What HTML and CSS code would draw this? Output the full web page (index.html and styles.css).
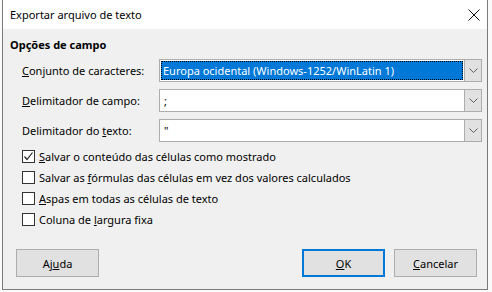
FILE: index.html
```html
<!DOCTYPE html>
<html lang="pt">
<head>
<meta charset="utf-8">
<title>Exportar arquivo de texto</title>
<link rel="stylesheet" href="styles.css">
</head>
<body>
<div class="window">
  <div class="titlebar">
    <span class="title">Exportar arquivo de texto</span>
    <svg class="close" width="12" height="12" viewBox="0 0 12 12"><path d="M0.5 0.5 L11.5 11.5 M11.5 0.5 L0.5 11.5" stroke="#111" stroke-width="1" fill="none"/></svg>
  </div>
  <div class="content">
    <div class="section-title">Opções de campo</div>
    <div class="fields">
      <div class="row">
        <span class="label"><u>C</u>onjunto de caracteres:</span>
        <div class="combo">
          <div class="field selected"><span class="focus">Europa ocidental (Windows-1252/WinLatin 1)</span></div>
          <div class="drop"><svg width="9" height="5" viewBox="0 0 9 5"><path d="M0.5 0.5 L4.5 4.5 L8.5 0.5" stroke="#606060" fill="none"/></svg></div>
        </div>
      </div>
      <div class="row">
        <span class="label"><u>D</u>elimitador de campo:</span>
        <div class="combo">
          <div class="field">;</div>
          <div class="drop"><svg width="9" height="5" viewBox="0 0 9 5"><path d="M0.5 0.5 L4.5 4.5 L8.5 0.5" stroke="#606060" fill="none"/></svg></div>
        </div>
      </div>
      <div class="row">
        <span class="label">Delimitador do <u>t</u>exto:</span>
        <div class="combo">
          <div class="field">"</div>
          <div class="drop"><svg width="9" height="5" viewBox="0 0 9 5"><path d="M0.5 0.5 L4.5 4.5 L8.5 0.5" stroke="#606060" fill="none"/></svg></div>
        </div>
      </div>
    </div>
    <div class="checks">
      <label class="check"><span class="box"><svg width="11" height="11" viewBox="0 0 11 11"><path d="M1.5 5.5 L4 8.5 L9.5 1.5" stroke="#222" stroke-width="1.2" fill="none"/></svg></span><span><u>S</u>alvar o conteúdo das células como mostrado</span></label>
      <label class="check"><span class="box"></span><span>Salvar as <u>f</u>órmulas das células em vez dos valores calculados</span></label>
      <label class="check"><span class="box"></span><span><u>A</u>spas em todas as células de texto</span></label>
      <label class="check"><span class="box"></span><span>Coluna de <u>l</u>argura fixa</span></label>
    </div>
    <div class="buttons">
      <button class="btn">Aj<u>u</u>da</button>
      <div class="spacer"></div>
      <button class="btn default"><u>O</u>K</button>
      <button class="btn"><u>C</u>ancelar</button>
    </div>
  </div>
</div>
</body>
</html>
```

FILE: styles.css
```css
html, body {
  margin: 0;
  padding: 0;
}
body {
  width: 492px;
  height: 292px;
  overflow: hidden;
  background-color: #fafafa;
  font-family: "Noto Sans", sans-serif;
  font-size: 11px;
  color: #000;
  padding-left: 2px;
  box-sizing: border-box;
}
.window {
  width: 486px;
  height: 290px;
  box-sizing: border-box;
  border: 1px solid #7a7a7a;
  border-top: none;
  background: #f0f0f0;
  display: flex;
  flex-direction: column;
}
.titlebar {
  height: 29px;
  flex: none;
  background: #fff;
  display: flex;
  align-items: center;
  padding: 0 6px 0 7px;
}
.title {
  flex: 1;
  line-height: 16px;
}
.close {
  margin-right: 1px;
}
.content {
  flex: 1;
  display: flex;
  flex-direction: column;
  padding: 0 5px 12px 7px;
}
.section-title {
  font-weight: bold;
  margin-top: 8px;
  line-height: 16px;
}
.fields {
  display: flex;
  flex-direction: column;
  gap: 7px;
  margin-top: 6px;
  padding-left: 12px;
}
.row {
  display: flex;
  align-items: center;
  height: 23px;
}
.label {
  width: 137px;
  flex: none;
}
.combo {
  flex: 1;
  height: 23px;
  box-sizing: border-box;
  border: 1px solid #adadad;
  background: #fff;
  display: flex;
}
.field {
  flex: 1;
  display: flex;
  align-items: center;
  padding-left: 4px;
}
.field.selected {
  padding: 1px;
}
.focus {
  flex: 1;
  align-self: stretch;
  display: flex;
  align-items: center;
  background: #0078d7;
  color: #fff;
  padding-left: 2px;
  outline: 1px dotted #000;
  outline-offset: -1px;
}
.drop {
  width: 17px;
  flex: none;
  box-sizing: border-box;
  border-left: 1px solid #adadad;
  background: #e1e1e1;
  display: flex;
  align-items: center;
  justify-content: center;
}
.checks {
  display: flex;
  flex-direction: column;
  gap: 8px;
  margin-top: 8px;
  padding-left: 12px;
}
.check {
  display: flex;
  align-items: center;
  height: 13px;
  gap: 4px;
}
.box {
  width: 13px;
  height: 13px;
  box-sizing: border-box;
  border: 1px solid #333;
  background: #fff;
  display: flex;
  align-items: center;
  justify-content: center;
}
.buttons {
  margin-top: auto;
  display: flex;
  align-items: center;
  padding-left: 6px;
  padding-right: 5px;
}
.spacer {
  flex: 1;
}
.btn {
  font: inherit;
  width: 83px;
  height: 28px;
  box-sizing: border-box;
  border: 1px solid #adadad;
  background: #e1e1e1;
  color: #000;
  padding: 0;
  margin: 0;
}
.btn.default {
  border: 2px solid #0078d7;
  margin-right: 9px;
}
```
